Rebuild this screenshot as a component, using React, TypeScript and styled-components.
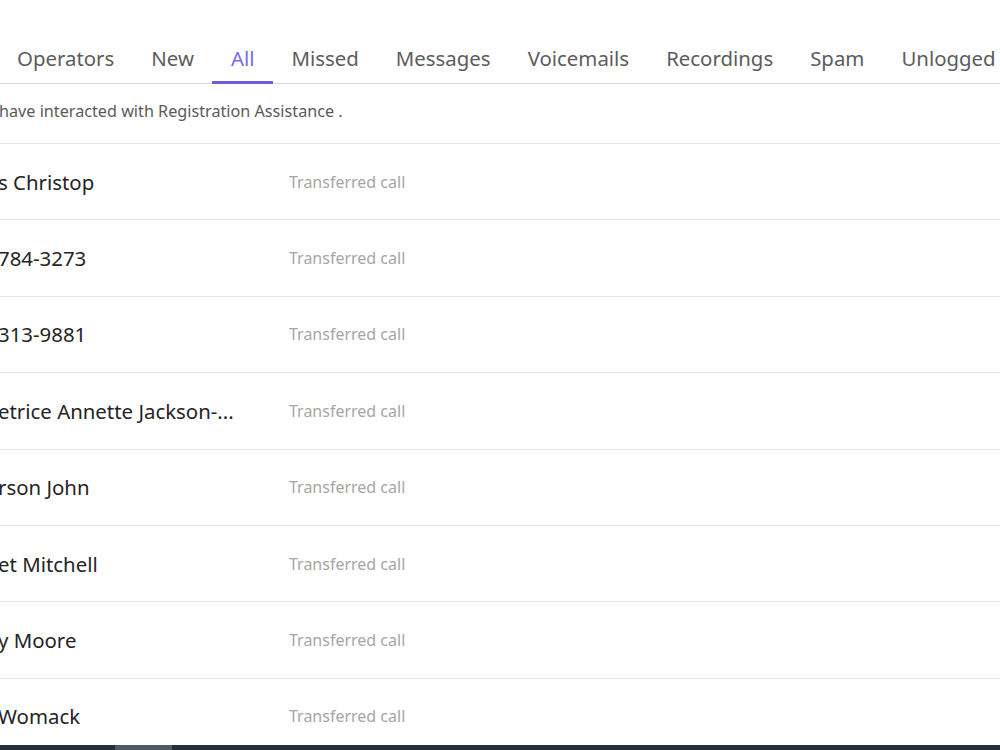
import React from "react";
import styled, { createGlobalStyle } from "styled-components";

const Global = createGlobalStyle`
  html, body { margin: 0; padding: 0; background: #ffffff; }
  body { font-family: "Noto Sans", "Open Sans", sans-serif; overflow: hidden; }
`;

const Page = styled.div`
  width: 1000px;
  height: 750px;
  display: flex;
  flex-direction: column;
  overflow: hidden;
  background: #ffffff;
`;

const Main = styled.div`
  flex: 1;
  display: flex;
  flex-direction: column;
  padding-top: 37px;
  overflow: hidden;
`;

const TabBar = styled.div`
  display: flex;
  border-bottom: 1px solid #d6d6d6;
  margin-left: -1.5px;
  height: 47px;
  box-sizing: border-box;
  flex-shrink: 0;
`;

const Tab = styled.div<{ $active?: boolean }>`
  padding: 0 18.5px;
  font-size: 20.4px;
  line-height: 42px;
  color: ${(p) => (p.$active ? "#7b68ee" : "#5c5c5c")};
  border-bottom: 3px solid ${(p) => (p.$active ? "#6f5bdc" : "transparent")};
  margin-bottom: -1px;
  white-space: nowrap;
`;

const Info = styled.div`
  font-size: 16.2px;
  color: #5a5a5a;
  height: 60px;
  line-height: 55px;
  margin-left: -1px;
  border-bottom: 1px solid #e6e6e6;
  white-space: nowrap;
  box-sizing: border-box;
  flex-shrink: 0;
`;

const Row = styled.div`
  display: grid;
  grid-template-columns: 289px 1fr;
  align-items: center;
  height: 76.4px;
  box-sizing: border-box;
  border-bottom: 1px solid #e6e6e6;
  flex-shrink: 0;
`;

const Name = styled.div`
  font-size: 20.4px;
  color: #242424;
  white-space: nowrap;
  margin-left: -2px;
`;

const Status = styled.div`
  font-size: 16px;
  color: #a6a6a6;
`;

const Taskbar = styled.div`
  height: 5px;
  flex-shrink: 0;
  display: flex;
  background: #1f313c;
`;

const TaskItem = styled.div<{ $w: number; $left: number }>`
  margin-left: ${(p) => p.$left}px;
  width: ${(p) => p.$w}px;
  background: #4a5b62;
`;

const tabs = ["Operators", "New", "All", "Missed", "Messages", "Voicemails", "Recordings", "Spam", "Unlogged"];
const names = [
  "s Christop",
  "784-3273",
  "313-9881",
  "etrice Annette Jackson-...",
  "rson John",
  "et Mitchell",
  "y Moore",
  "Womack",
];

export default function App() {
  return (
    <Page>
      <Global />
      <Main>
        <TabBar>
          {tabs.map((t) => (
            <Tab key={t} $active={t === "All"}>
              {t}
            </Tab>
          ))}
        </TabBar>
        <Info>have interacted with Registration Assistance .</Info>
        {names.map((n, i) => (
          <Row key={i}>
            <Name>{n}</Name>
            <Status>Transferred call</Status>
          </Row>
        ))}
      </Main>
      <Taskbar>
        <TaskItem $left={115} $w={57} />
      </Taskbar>
    </Page>
  );
}
